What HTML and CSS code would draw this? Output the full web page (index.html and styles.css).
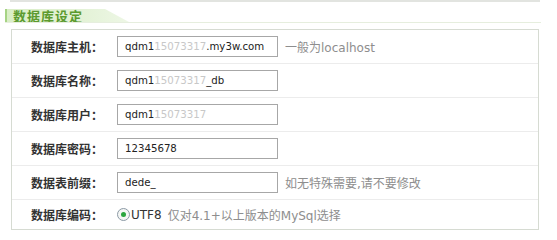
FILE: index.html
```html
<!DOCTYPE html>
<html lang="zh-CN">
<head>
<meta charset="utf-8">
<title>数据库设定</title>
<link rel="stylesheet" href="styles.css">
</head>
<body>
<div class="prev-box"></div>
<div class="section-title"><div class="tab">数据库设定</div></div>
<div class="form-table">
  <div class="row">
    <div class="label">数据库主机：</div>
    <div class="field"><span class="input">qdm1<span class="masked">15073317</span>.my3w.com</span></div>
    <div class="hint">一般为localhost</div>
  </div>
  <div class="row">
    <div class="label">数据库名称：</div>
    <div class="field"><span class="input">qdm1<span class="masked">15073317</span>_db</span></div>
  </div>
  <div class="row">
    <div class="label">数据库用户：</div>
    <div class="field"><span class="input">qdm1<span class="masked">15073317</span></span></div>
  </div>
  <div class="row">
    <div class="label">数据库密码：</div>
    <div class="field"><span class="input">12345678</span></div>
  </div>
  <div class="row">
    <div class="label">数据表前缀：</div>
    <div class="field"><span class="input">dede_</span></div>
    <div class="hint">如无特殊需要,请不要修改</div>
  </div>
  <div class="row last">
    <div class="label">数据库编码：</div>
    <div class="radio"><span class="radio-dot"></span></div>
    <div class="radio-text">UTF8</div>
    <div class="hint tight">仅对4.1+以上版本的MySql选择</div>
  </div>
</div>
</body>
</html>
```

FILE: styles.css
```css
html, body {
  margin: 0;
  padding: 0;
  background: #ffffff;
}
body {
  font-family: "DejaVu Sans", "Noto Sans CJK SC", sans-serif;
  font-size: 12px;
  color: #333;
}
.prev-box {
  margin-left: 10px;
  width: 530px;
  height: 0;
  border-bottom: 2px solid #e2e4e0;
}
.section-title {
  margin: 7px 16px 0 5px;
  border-bottom: 1px solid #e6eede;
}
.tab {
  width: 118px;
  height: 13px;
  padding-left: 6px;
  border-left: 2px solid #a6d384;
  background: linear-gradient(90deg, #d9eec6 0%, #e3f2d6 60%, #eef7e6 100%);
  clip-path: polygon(0 0, 100px 0, 124px 100%, 0 100%);
  font-family: "Noto Sans CJK SC", sans-serif;
  font-weight: bold;
  font-size: 13px;
  line-height: 13px;
  letter-spacing: 1px;
  color: #5c9a2f;
}
.form-table {
  margin: 6px 0 0 11px;
  width: 526px;
  border: 1px solid #d6dbd2;
}
.row {
  display: flex;
  align-items: center;
  height: 33px;
  border-bottom: 1px solid #ececec;
}
.row.last {
  height: 29px;
  border-bottom: none;
}
.label {
  width: 91px;
  margin-right: 14px;
  text-align: right;
  font-family: "Noto Sans CJK SC", sans-serif;
  font-weight: bold;
  font-size: 12px;
  color: #333;
}
.input {
  display: block;
  box-sizing: border-box;
  width: 161px;
  height: 21px;
  padding-left: 7px;
  border: 1px solid #a7a7a7;
  background: #fff;
  font-family: "DejaVu Sans", sans-serif;
  font-size: 10.2px;
  line-height: 19px;
  color: #222;
}
.masked {
  color: #c8c8c8;
}
.hint {
  margin-left: 7px;
  font-family: "DejaVu Sans", "Noto Sans CJK SC", sans-serif;
  font-size: 12px;
  color: #8e8e8e;
}
.hint.tight {
  margin-left: 6px;
}
.radio {
  box-sizing: border-box;
  width: 13px;
  height: 13px;
  border: 1px solid #8c9aa6;
  border-radius: 50%;
  background: #f4f6f4;
  display: flex;
  align-items: center;
  justify-content: center;
}
.radio-dot {
  width: 5px;
  height: 5px;
  border-radius: 50%;
  background: #2aa53e;
}
.radio-text {
  margin-left: 1px;
  font-family: "DejaVu Sans", sans-serif;
  font-size: 12px;
  color: #333;
}
```
